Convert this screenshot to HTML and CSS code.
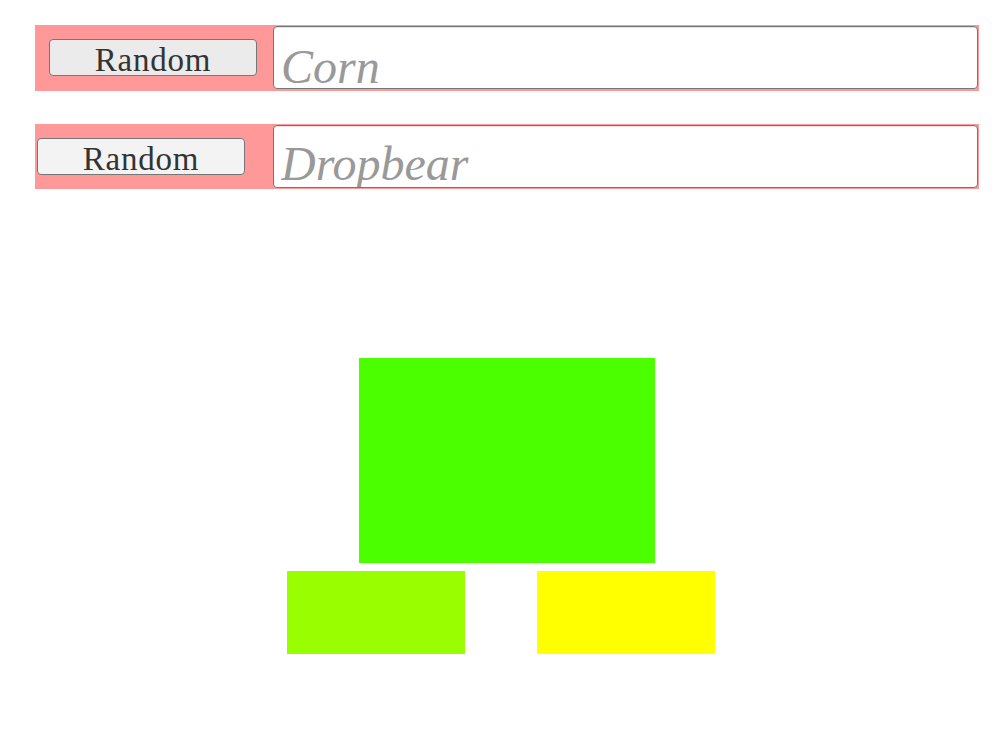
FILE: index.html
```html
<!DOCTYPE html>
<html>
<head>
<meta charset="utf-8">
<link rel="stylesheet" href="styles.css">
</head>
<body>
<div class="page">
  <div class="row row-first">
    <button class="rand">Random</button>
    <input class="name" type="text" placeholder="Corn">
  </div>
  <div class="row row-second">
    <button class="rand rand-light">Random</button>
    <input class="name name-second" type="text" placeholder="Dropbear">
  </div>
  <div class="blocks">
    <div class="block-big"></div>
    <div class="block-row">
      <div class="block-small block-lime"></div>
      <div class="block-small block-yellow"></div>
    </div>
  </div>
</div>
</body>
</html>
```
FILE: styles.css
```css
html, body {
  margin: 0;
  padding: 0;
  background: #fff;
}
.page {
  padding-top: 25px;
  padding-left: 35px;
}
.row {
  width: 944px;
  background: #ff9999;
  display: flex;
  align-items: flex-start;
  box-sizing: border-box;
  padding-right: 1px;
}
.row-first {
  height: 66px;
  padding-left: 14px;
}
.row-second {
  height: 65px;
  padding-left: 2px;
  margin-top: 33px;
}
.rand {
  margin-top: 14px;
  width: 208px;
  height: 37px;
  box-sizing: border-box;
  border: 1px solid #767676;
  border-radius: 4px;
  background: #ebebeb;
  color: #333;
  font-family: "Liberation Serif", serif;
  font-size: 33px;
  letter-spacing: 0.8px;
  line-height: 33px;
  padding: 4px 0 0 0;
}
.rand-light {
  background: #f3f3f3;
}
.name {
  margin-left: auto;
  margin-top: 1px;
  width: 705px;
  height: 63px;
  box-sizing: border-box;
  border: 1px solid #767676;
  border-radius: 4px;
  background: #fff;
  box-shadow: inset 0 1px 1px rgba(0,0,0,0.12);
  font-family: "Liberation Serif", serif;
  font-style: italic;
  font-size: 48px;
  line-height: 44px;
  padding: 17px 7px 0 7px;
  color: #333;
  outline: none;
}
.name-second {
  padding-top: 13px;
  line-height: 48px;
}
.name::placeholder {
  color: #999;
  opacity: 1;
}
.blocks {
  margin-top: 169px;
  margin-left: 252px;
  display: flex;
  flex-direction: column;
  gap: 8px;
}
.block-big {
  margin-left: 72px;
  width: 296px;
  height: 205px;
  background: #4cff00;
}
.block-row {
  display: flex;
  gap: 72px;
}
.block-small {
  width: 178px;
  height: 83px;
}
.block-lime {
  background: #99ff00;
}
.block-yellow {
  background: #ffff00;
}
```
